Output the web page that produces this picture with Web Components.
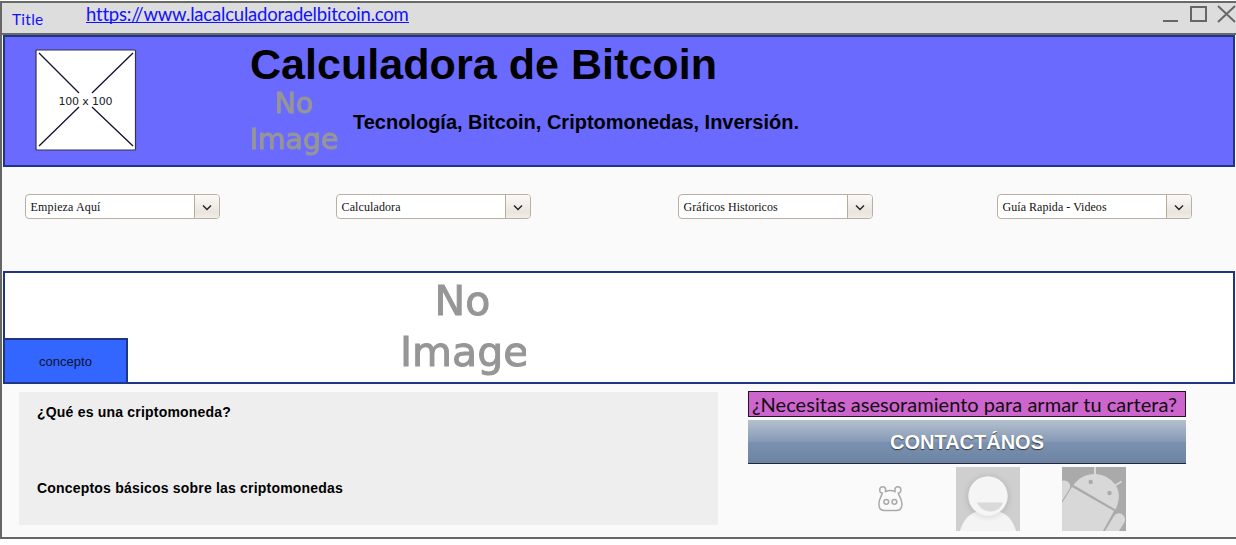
<!DOCTYPE html>
<html lang="es">
<head>
<meta charset="utf-8">
<title>Calculadora de Bitcoin</title>
<style>
html,body{margin:0;height:545px;background:#fff;overflow:hidden}
body{font-family:"Liberation Sans",Arial,sans-serif;color:#000}
</style>
</head>
<body>
<mock-window></mock-window>
<script>
function define(name, html, after) {
  const t = document.createElement('template');
  t.innerHTML = html;
  customElements.define(name, class extends HTMLElement {
    connectedCallback() {
      if (this.shadowRoot) return;
      this.attachShadow({mode: 'open'}).append(t.content.cloneNode(true));
      if (after) after(this, this.shadowRoot);
    }
  });
}

/* One line of text; "fit" is its width in pixels, reached by tracking. */
define('fit-text', `<style>
:host{display:block;white-space:nowrap;flex:none}
span{display:inline-block;vertical-align:top}
</style><span><slot></slot></span>`, (el, root) => {
  const span = root.querySelector('span'), w = +el.getAttribute('fit');
  if (!w) return;
  const n = el.textContent.length;
  span.style.letterSpacing = ((w - span.getBoundingClientRect().width) / n) + 'px';
});

define('window-bar', `<style>
:host{display:flex;box-sizing:border-box;height:34px;border-top:2px solid #666a66;border-bottom:2px solid #666a66;background:#ddd;font-family:Lato,sans-serif;color:#11f}
.t{font-size:15.5px;line-height:20px;margin:6px 0 0 10px;width:74px}
a{display:block;font-size:18.5px;line-height:22px;height:19px;border-bottom:1px solid #11f;color:inherit;text-decoration:none}
svg{margin:1px 0 0 auto}
</style><fit-text class="t" fit="31.5">Title</fit-text><a href="#"><fit-text fit="322">https://www.lacalculadoradelbitcoin.com</fit-text></a>
<svg width="76" height="24" fill="none" stroke="#666" stroke-width="2"><path d="M3 17H18"/><rect x="31" y="3" width="15" height="14"/><path d="M58 2L75 18M75 2L58 18" stroke-width="1.9"/></svg>`);

define('image-box', `<style>:host{display:block;flex:none;width:102px;height:102px}
svg{display:block}text{font:11px "DejaVu Sans",sans-serif;fill:#222}</style>
<svg width="102" height="102"><rect x="1" y="1" width="99.5" height="100" rx="1" fill="#fff" stroke="#33334d" stroke-width="1.2"/>
<path d="M4 4L44 44M57 58L98 97M98 4L57 44M44 58L4 97" stroke="#111133" stroke-width="1.3"/>
<text x="23.5" y="55.5" textLength="54">100 x 100</text></svg>`);

define('no-image', `<style>
:host{display:block;flex:none;overflow:hidden;text-align:center;font-family:"DejaVu Sans",sans-serif;color:#969696;-webkit-text-stroke:1px #969696;filter:blur(.5px);white-space:nowrap}
</style>No<br>Image`);

define('hero-header', `<style>
:host{display:flex;box-sizing:border-box;height:132px;border:2px solid #1f3585;background:#6a6aff}
image-box{margin:12px 0 0 30px}
.c{margin:2px 0 0 113px}
.row{display:flex}
h1,h2{margin:0}
h1{font-size:43px;line-height:50px;height:47px}
no-image{width:90px;margin-left:-1px;font-size:28.3px;line-height:36px;height:76px}
h2{font-size:20px;line-height:24px;margin:24px 0 0 14px}
</style><image-box></image-box><div class="c"><h1><fit-text fit="467">Calculadora de Bitcoin</fit-text></h1>
<div class="row"><no-image></no-image><h2><fit-text fit="446">Tecnología, Bitcoin, Criptomonedas, Inversión.</fit-text></h2></div></div>`);

define('drop-box', `<style>
:host{display:flex;box-sizing:border-box;width:195px;height:25px;border:1.5px solid #b9afa2;border-radius:4px;background:#fff;color:#111;overflow:hidden}
.b{width:24px;border-left:1px solid #b9ab99;background:linear-gradient(#fbfaf8,#e9e5dd 75%,#f1eee8)}
svg{display:block}
</style><slot></slot><div class="b"><svg width="24" height="23" fill="none" stroke="#222" stroke-width="1.4"><path d="M8 10.5L12 14.5L16 10.5"/></svg></div>`);

define('menu-row', `<style>
:host{display:grid;grid-template-columns:311px 342px 319px 195px;margin:26.5px 0 0 21.6px;height:77.5px;align-items:start}
drop-box{font:12px/24px "Liberation Serif",serif}
fit-text{padding-left:5px;flex:1}
</style><drop-box><fit-text fit="70">Empieza Aquí</fit-text></drop-box><drop-box><fit-text fit="59">Calculadora</fit-text></drop-box><drop-box><fit-text fit="94">Gráficos Historicos</fit-text></drop-box><drop-box><fit-text fit="104">Guía Rapida - Videos</fit-text></drop-box>`);

define('concept-banner', `<style>
:host{display:flex;align-items:flex-end;box-sizing:border-box;height:113px;border:2px solid #1f3585;background:#fff}
.k{display:flex;flex:none;align-items:center;justify-content:center;box-sizing:border-box;width:125px;height:46px;margin:0 0 -2px -2px;border:2px solid #1f3585;background:#36f;color:#0a1230;font-size:13px}
no-image{width:126px;margin:0 0 2px 272px;font-size:41px;line-height:51px;height:104px;text-indent:-1px}
</style><div class="k"><fit-text fit="53">concepto</fit-text></div><no-image></no-image>`);

define('topic-panel', `<style>
:host{display:block;width:699px;height:133px;background:#eee;font-size:14px;font-weight:bold;line-height:20px}
fit-text{margin-left:18px;padding-top:10px;height:66px}
</style><fit-text fit="194">¿Qué es una criptomoneda?</fit-text><fit-text fit="306">Conceptos básicos sobre las criptomonedas</fit-text>`);

define('user-icons', `<style>:host{display:flex;height:64px;margin:3px 0 0 130px}
svg{display:block;flex:none}.p{margin-left:53px}.a{margin-left:42px}</style>
<svg width="25" height="64" fill="none" stroke="#aaa" stroke-width="1.5"><path d="M4.3 26.2C2.8 26 1.7 24.8 1.7 23C1.7 21 3 19.8 4.8 19.8C6.5 19.8 7.6 20.8 7.6 22.8L7.5 24.6C10.5 23.3 14 23.3 17 24.6L17 22.8C17 20.8 18 19.8 19.8 19.8C21.6 19.8 22.9 21 22.9 23C22.9 24.8 21.8 26 20.3 26.2C21.3 29.5 23.9 32 23.9 37C23.9 41.5 22 43.5 18.5 43.5H6.2C2.7 43.5 .9 41.5 .9 37C.9 32 3.3 29.5 4.3 26.2Z"/><circle cx="8.3" cy="34.8" r="2.4"/><circle cx="16.4" cy="34.8" r="2.4"/></svg>
<svg class="p" width="64" height="64"><defs><radialGradient id="g"><stop offset=".75" stop-color="#bbb"/><stop offset="1" stop-color="#ccc" stop-opacity="0"/></radialGradient><clipPath id="c"><path d="M4 64C9 47 19 43.5 32 43.5S55 47 60 64Z"/></clipPath></defs><rect width="64" height="64" fill="#cfcfcf"/><circle cx="32" cy="30" r="27" fill="url(#g)" opacity=".7"/><path d="M4 64C9 47 19 43.5 32 43.5S55 47 60 64Z" fill="#f4f4f4"/><circle cx="32" cy="31" r="24" fill="url(#g)" opacity=".3" clip-path="url(#c)"/><circle cx="32" cy="29" r="19.7" fill="#f5f5f5"/><path d="M21 35.5H47C43 47.5 26 47.5 21 35.5Z" fill="#dadada"/></svg>
<svg class="a" width="64" height="64"><rect width="64" height="64" fill="#aaa"/><g fill="#d8d8d8"><path d="M11.5 18C20 6 35 4 46 11C57 18 60 29 53.5 42.5Z"/><path d="M10 20L52 44L41 64H0V36Z"/><path d="M0 14C5 12 10 17 7.5 22L0 34Z"/><path d="M43 64L52 49C56 43 66 48 62 56L57 64Z"/><path d="M33 0V8M53 18.5L59.5 14.5" stroke="#d8d8d8" stroke-width="2"/></g><circle cx="28.7" cy="15" r="2.2" fill="#aaa"/><circle cx="47.5" cy="26" r="2.2" fill="#aaa"/></svg>`);

define('contact-panel', `<style>
:host{display:block;width:438px}
.q{box-sizing:border-box;height:26px;border:1px solid #221522;background:#c6c;padding-left:3px;font:20px/24px Lato,sans-serif;color:#130b13}
button{display:flex;justify-content:center;align-items:center;box-sizing:border-box;width:438px;height:44px;margin:3px 0 0;padding:0;border:0;border-bottom:1px solid #22283a;background:linear-gradient(#b4c0cd,#869ab7 50%,#7b91b0 51%,#6d83a3);color:#fff;font:bold 20px/24px "Liberation Sans",Arial,sans-serif;text-shadow:0 1px 1px #333}
</style><div class="q"><fit-text fit="425">¿Necesitas asesoramiento para armar tu cartera?</fit-text></div><button><fit-text fit="154">CONTACTÁNOS</fit-text></button><user-icons></user-icons>`);

define('mock-window', `<style>
:host{display:block;box-sizing:border-box;width:1236px;height:538px;margin-top:1px;border-left:2px solid #666;border-bottom:2px solid #666;background:#fafafa}
main{width:1232px;margin-left:1px}
.cols{display:flex;gap:30px;margin:8px 0 0 16px}
contact-panel{margin-top:-1px}
</style><window-bar></window-bar><main><hero-header></hero-header><menu-row></menu-row><concept-banner></concept-banner><div class="cols"><topic-panel></topic-panel><contact-panel></contact-panel></div></main>`);
</script>
</body>
</html>
